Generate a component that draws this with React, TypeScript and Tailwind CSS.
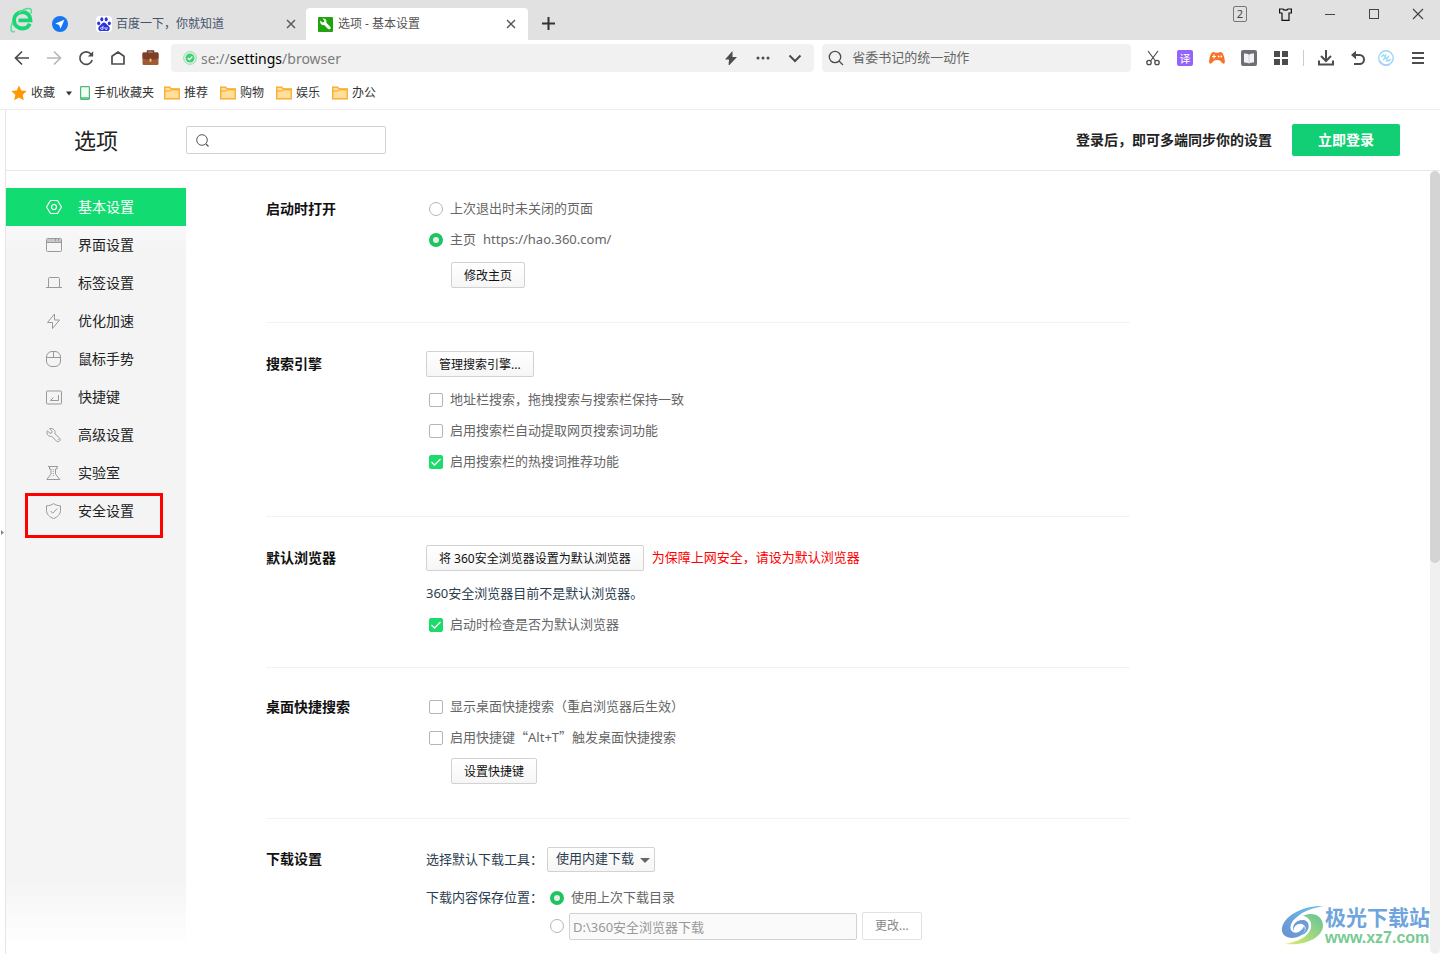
import type { ReactNode } from "react";
import clsx from "clsx";

const sansStack = "font-['Noto_Sans','Noto_Sans_CJK_SC',sans-serif]";

type IconProps = {
  size?: number;
  className?: string;
  children: ReactNode;
};

function Icon({ size = 18, className, children }: IconProps) {
  return (
    <svg
      width={size}
      height={size}
      viewBox={`0 0 ${size} ${size}`}
      fill="none"
      stroke="currentColor"
      className={clsx("shrink-0", className)}
      aria-hidden="true"
    >
      {children}
    </svg>
  );
}

function BrowserLogo() {
  return (
    <svg width="24" height="26" viewBox="0 0 24 26" fill="none" className="shrink-0" aria-hidden="true">
      <path
        d="M19.800 16.800c-1.300 3-4.100 4.700-7.300 4.700-4.800 0-8.500-3.500-8.500-8.200s3.700-8.300 8.500-8.300c4.600 0 8 3.400 8 8.300H8.500"
        stroke="#19d573"
        strokeWidth="3.800"
      />
      <path d="M21 6.500c.8-2.600.4-4.200-1-4.700C17.500 1 13 2.600 8.500 6" stroke="#4be08f" strokeWidth="1.500" />
      <path d="M2.800 14.500C.9 19 .6 23.400 2.200 24.600c.7.500 1.600.3 2.700-.2" stroke="#4be08f" strokeWidth="1.500" />
    </svg>
  );
}

function TelegramBadge() {
  return (
    <svg width="16" height="16" viewBox="0 0 16 16" className="shrink-0" aria-hidden="true">
      <circle cx="8" cy="8" r="8" fill="#1677f0" />
      <path d="M12.400 3.700 3.300 7.600l3.800 1.300 1.400 3.800z" fill="#fff" />
    </svg>
  );
}

function PawIcon() {
  return (
    <svg width="16" height="16" viewBox="0 0 16 16" className="shrink-0 rounded-sm bg-white" aria-hidden="true">
      <g fill="#2a32dd">
        <ellipse cx="2.700" cy="7.300" rx="1.500" ry="1.900" />
        <ellipse cx="5.800" cy="3.300" rx="1.500" ry="2.100" />
        <ellipse cx="10.200" cy="3.300" rx="1.500" ry="2.100" />
        <ellipse cx="13.300" cy="7.300" rx="1.500" ry="1.900" />
        <path d="M8 6.600c1.600 0 2.300 1.500 3.400 2.500 1.300 1.200 2.400 2 2.300 3.700-.1 1.700-1.500 2.500-3 2.300-1-.1-1.700-.2-2.700-.2s-1.700.1-2.700.2c-1.500.2-2.900-.6-3-2.300-.1-1.700 1-2.500 2.300-3.700C5.700 8.100 6.400 6.600 8 6.600z" />
      </g>
      <path d="M7 9.800v3.600H5.600a1 1 0 0 1 0-2H7M9 11v1.600c0 .5.300.8.800.8H11V11" fill="none" stroke="#fff" strokeWidth=".8" />
    </svg>
  );
}

function WrenchBadge() {
  return (
    <svg width="15" height="15" viewBox="0 0 15 15" className="shrink-0" aria-hidden="true">
      <rect width="15" height="15" rx="1" fill="#21a30d" />
      <path
        d="M2.300 3.500 4.400 5.500 6 5 6.400 3.400 4.500 1.700c1.800-.5 3.900.7 4 2.700 0 .5-.1.900-.2 1.300l4 4c1.400 1.500-.7 3.600-2.200 2.200L6.200 8C4 8.700 1.500 6.500 2.300 3.500z"
        fill="#fff"
      />
    </svg>
  );
}

function FolderIcon() {
  return (
    <svg width="16" height="14" viewBox="0 0 16 14" className="shrink-0" aria-hidden="true">
      <path d="M.7 12.900V1.200h5l1.300 1.600h8.200v10.100z" fill="#ffdf9b" stroke="#f9a51d" strokeWidth="1.200" />
      <path d="M1 5h5l1.200-1.100H15" fill="none" stroke="#f9a51d" />
    </svg>
  );
}

function BriefcaseIcon() {
  return (
    <svg width="17" height="16" viewBox="0 0 17 16" className="shrink-0" aria-hidden="true">
      <path d="M5.500 3V1h6v2" fill="none" stroke="#6b3420" strokeWidth="1.400" />
      <rect x=".5" y="2.500" width="16" height="12.500" rx="1.300" fill="#a05a36" />
      <path d="M.5 4c0-1 .5-1.500 1.300-1.500h13.400c.8 0 1.300.5 1.300 1.500v4.500c-5 1.600-11 1.600-16 0z" fill="#7c3f29" />
      <rect x="7.600" y="8.500" width="1.800" height="3.500" rx=".8" fill="#efc75e" />
    </svg>
  );
}

type MenuItem = { label: string; icon: ReactNode; active?: boolean; marked?: boolean };

const menu: MenuItem[] = [
  {
    label: "基本设置",
    active: true,
    icon: (
      <>
        <path d="M4.500 1.500h7l4 6.500-4 6.500h-7L.5 8z" strokeLinejoin="round" strokeWidth="1.200" />
        <circle cx="8" cy="8" r="2.500" strokeWidth="1.200" />
      </>
    ),
  },
  {
    label: "界面设置",
    icon: (
      <>
        <rect x=".5" y="1.500" width="15" height="13" rx="1" />
        <path d="M1 3.500h14" strokeOpacity=".5" strokeWidth="3" />
        <path d="M1 5.500h14M9.500 2v2M12.500 2v2" />
      </>
    ),
  },
  {
    label: "标签设置",
    icon: <path d="M2.500 12V3.500a1 1 0 0 1 1-1h9a1 1 0 0 1 1 1V12M0 12.500h16" />,
  },
  {
    label: "优化加速",
    icon: <path d="M8.500 1 1.500 9.500h5V15.500l7-8.500h-5z" strokeLinejoin="round" />,
  },
  {
    label: "鼠标手势",
    icon: (
      <>
        <rect x=".5" y=".5" width="14" height="15" rx="5.500" />
        <path d="M.5 6.500h14M7.500.5v6" />
      </>
    ),
  },
  {
    label: "快捷键",
    icon: (
      <>
        <rect x=".5" y="2" width="15" height="13" rx="1" />
        <path d="M12.500 6v5.500H4.500L7.500 8.500" />
      </>
    ),
  },
  {
    label: "高级设置",
    icon: (
      <path
        d="M3.500 1.700 6 4.200 5.600 6 4 6.300 1.400 3.800C-.2 7 2.600 10 5.800 9.300l4.600 4.700c1.900 2 5-.9 3.200-2.900L8.900 6.700C9.800 3.500 6.700.5 3.500 1.700zM11.800 12.300h.9"
        strokeLinejoin="round"
      />
    ),
  },
  {
    label: "实验室",
    icon: (
      <>
        <path d="M2 1.500h10M3.500 2v2h1.500v5L.8 14.500h13L9.500 9V4H11V2" />
        <path d="M7.300 4v8" strokeDasharray="1 1" />
      </>
    ),
  },
  {
    label: "安全设置",
    marked: true,
    icon: (
      <>
        <path d="M7.500.6c2 1.500 4.200 2 7 2.200v4.700c0 3.800-3 6.600-7 8.100-4-1.500-7-4.300-7-8.100V2.800c2.800-.2 5-.7 7-2.200z" />
        <path d="m4.500 8 2.200 2.200 4.500-4.600" />
      </>
    ),
  },
];

function TabStrip() {
  return (
    <div className="flex h-10 items-end bg-[#e1e1e1] pl-2.5">
      <div className="flex h-10 items-center gap-4 pb-px">
        <BrowserLogo />
        <span className="pt-2 pl-0.5">
          <TelegramBadge />
        </span>
      </div>
      <div className="flex h-8 w-[238px] items-center gap-1 pl-7 text-[12px] text-[#45536b]">
        <PawIcon />
        <span className="flex-1">百度一下，你就知道</span>
        <button aria-label="关闭百度标签" className="mr-2.5 text-[#555]">
          <Icon size={10}>
            <path d="m1 1 8 8M9 1 1 9" strokeWidth="1.400" />
          </Icon>
        </button>
      </div>
      <div className="flex h-8 w-[222px] items-center gap-1 rounded-t bg-white pr-3 pl-3 text-[12px] text-[#555]">
        <WrenchBadge />
        <span className="flex-1 pl-px">选项 - 基本设置</span>
        <button aria-label="关闭选项标签" className="text-[#555]">
          <Icon size={10}>
            <path d="m1 1 8 8M9 1 1 9" strokeWidth="1.400" />
          </Icon>
        </button>
      </div>
      <button aria-label="新建标签" className="mb-2.5 ml-3.5 text-[#333]">
        <Icon size={13}>
          <path d="M6.500 0v13M0 6.500h13" strokeWidth="2" />
        </Icon>
      </button>
      <div className="mb-3 ml-auto flex h-7 items-center gap-8 pr-4 text-[#444]">
        <span className="flex h-4 w-3.5 items-center justify-center rounded-xs border border-[#777] text-[11px]">2</span>
        <button aria-label="皮肤" className="text-[#111]">
          <Icon size={13}>
            <path d="M4 1H.6v4H3v7.400h7V5h2.400V1H9C8.500 2.500 4.500 2.500 4 1z" strokeWidth="1.200" />
          </Icon>
        </button>
        <button aria-label="最小化">
          <Icon size={12}>
            <path d="M1 6.500h10" />
          </Icon>
        </button>
        <button aria-label="最大化">
          <Icon size={12}>
            <rect x="1.500" y="1.500" width="9" height="9" />
          </Icon>
        </button>
        <button aria-label="关闭窗口">
          <Icon size={12}>
            <path d="m1 1 10 10M11 1 1 11" strokeWidth="1.200" />
          </Icon>
        </button>
      </div>
    </div>
  );
}

function AddressRow() {
  return (
    <div className="flex h-9 items-center pr-3.5 pl-3.5 text-[#4c4c4c]">
      <div className="flex shrink-0 items-center gap-4">
        <button aria-label="后退">
          <Icon size={16}>
            <path d="M15 8H2M8 1.500 1.500 8 8 14.500" strokeWidth="1.700" />
          </Icon>
        </button>
        <button aria-label="前进" className="text-[#b8b8b8]">
          <Icon size={16}>
            <path d="M1 8h13M8 1.500 14.500 8 8 14.500" strokeWidth="1.700" />
          </Icon>
        </button>
        <button aria-label="刷新">
          <Icon size={16}>
            <path d="M14.200 10A6.300 6.300 0 1 1 13 4L14 5.500" strokeWidth="1.700" />
            <path d="M15.200 1.200v5.300H9.800z" fill="currentColor" stroke="none" />
          </Icon>
        </button>
        <button aria-label="主页">
          <Icon size={16}>
            <path d="M2 14V6.300L8 2l6 4.300V14z" strokeWidth="1.700" strokeLinejoin="round" />
          </Icon>
        </button>
        <button aria-label="工具箱">
          <BriefcaseIcon />
        </button>
      </div>
      <div className="ml-3 flex h-7 min-w-0 flex-[643] items-center rounded bg-[#f1f1f1] px-3">
        <Icon size={14} className="text-[#41cf73]">
          <circle cx="7" cy="7" r="6.300" strokeOpacity=".6" />
          <circle cx="7" cy="7" r="4.500" fill="currentColor" stroke="none" />
          <path d="m4.700 7 1.700 1.700L9.400 5.500" stroke="#fff" strokeWidth="1.200" />
        </Icon>
        <span className="ml-1 flex-1 text-[14px] text-[#7b7b7b]">
          se://<span className="text-black">settings</span>/browser
        </span>
        <div className="flex items-center gap-[18px]">
          <button aria-label="极速模式">
            <Icon size={14}>
              <path d="M8.500 0 1 8.500h4L4.500 15 13 6H8.500z" fill="currentColor" stroke="none" />
            </Icon>
          </button>
          <button aria-label="更多">
            <Icon size={14}>
              <path d="M2 7h.01M7 7h.01M12 7h.01" strokeWidth="3" strokeLinecap="round" />
            </Icon>
          </button>
          <button aria-label="展开">
            <Icon size={14}>
              <path d="m1.500 4.500 5.500 5.500 5.500-5.500" strokeWidth="2" />
            </Icon>
          </button>
        </div>
      </div>
      <div className="ml-2 flex h-7 min-w-0 flex-[308] items-center rounded bg-[#f1f1f1] px-1.5">
        <Icon size={16}>
          <circle cx="7" cy="7" r="5.700" strokeWidth="1.300" />
          <path d="m11 11 4 4" strokeWidth="1.300" />
        </Icon>
        <input
          type="text"
          aria-label="搜索"
          placeholder="省委书记的统一动作"
          className="ml-2 min-w-0 flex-1 bg-transparent text-[13px] outline-none placeholder:text-[#666]"
        />
      </div>
      <div className="ml-3.5 flex shrink-0 items-center gap-4">
        <button aria-label="截图">
          <Icon size={16}>
            <path d="m3 1 7.500 10M13 1 5.500 11" strokeWidth="1.200" />
            <circle cx="4" cy="12.500" r="2.200" strokeWidth="1.300" />
            <circle cx="12" cy="12.500" r="2.200" strokeWidth="1.300" />
          </Icon>
        </button>
        <button
          aria-label="翻译"
          className="flex size-4 items-center justify-center rounded-xs bg-[#9464f8] text-[11px] leading-none text-white"
        >
          译
        </button>
        <button aria-label="游戏">
          <Icon size={16} className="text-[#f9722a]">
            <path
              d="M4.500 2c1.200 0 1.300.8 3.500.8S10.300 2 11.500 2c2.500 0 4 4.600 4.400 9.500.2 2.700-2 2.900-3.300 1.100-1-1.500-1.500-2.600-4.600-2.600s-3.600 1.100-4.600 2.600C2.100 14.400-.1 14.200.1 11.500.5 6.600 2 2 4.500 2z"
              fill="currentColor"
              stroke="none"
            />
            <path d="M3 6.500h4M5 4.500v4" stroke="#fff" strokeWidth="1.200" />
            <circle cx="9.700" cy="6.500" r=".9" fill="#fff" stroke="none" />
            <circle cx="12.300" cy="6.500" r=".9" fill="#fff" stroke="none" />
          </Icon>
        </button>
        <button aria-label="小说">
          <Icon size={16}>
            <rect width="16" height="16" rx="2" fill="#6e6f76" stroke="none" />
            <path d="M3 3.500c2 0 3.500 0 5 1.200 1.500-1.200 3-1.200 5-1.200v9c-2 0-3.500 0-5 1-1.500-1-3-1-5-1z" fill="#f2f2f2" stroke="none" />
            <path d="M8 5v8" stroke="#d4d4d4" />
          </Icon>
        </button>
        <button aria-label="应用">
          <Icon size={16}>
            <path
              d="M1 1h6v6H1zM9 1h6v6H9zM1 9h6v6H1zM9 9h6v6H9z"
              fill="currentColor"
              stroke="none"
            />
          </Icon>
        </button>
        <span className="-mx-0.5 h-4 w-px bg-[#ccc]" />
        <button aria-label="下载">
          <Icon size={16}>
            <path d="M8 0v10.500M3 6l5 5 5-5M1 10.500V14.500h14V10.500" strokeWidth="2" />
          </Icon>
        </button>
        <button aria-label="恢复">
          <Icon size={16}>
            <path d="M2 5h7.500a4.500 4.500 0 0 1 0 9H4" strokeWidth="2" />
            <path d="M6 .8 1 5l5 4.200z" fill="currentColor" stroke="none" />
          </Icon>
        </button>
        <button aria-label="账号" className="-ml-1">
          <Icon size={16} className="text-[#9ad7fa]">
            <circle cx="8" cy="8" r="7.200" strokeWidth="1.400" />
            <path d="M1.500 11A7.200 7.200 0 0 0 12 14" stroke="#b3cdfb" strokeWidth="2" />
            <path d="m3.200 7 2.300-2 5 6 2.500-2M5 10l2-2M9 8l2-2M7 5.500l1.500-1M7.500 11.500l1.500-1" strokeWidth="1.400" />
          </Icon>
        </button>
        <button aria-label="菜单">
          <Icon size={16}>
            <path d="M2 3h12M2 8h12M2 13h12" strokeWidth="2" />
          </Icon>
        </button>
      </div>
    </div>
  );
}

function BookmarkRow() {
  const folders = ["推荐", "购物", "娱乐", "办公"];
  return (
    <div className="flex h-[34px] items-center border-b border-[#ececec] pl-[11px] text-[12px] text-[#333]">
      <Icon size={16} className="text-[#ff9800]">
        <path
          d="m8 .5 2.300 5 5.400.6-4 3.700 1.100 5.400L8 12.500l-4.800 2.700 1.100-5.400-4-3.700 5.400-.6z"
          fill="currentColor"
          stroke="none"
        />
      </Icon>
      <a href="#fav" className="ml-1">收藏</a>
      <Icon size={8} className="ml-2.5">
        <path d="M1 2.500h6L4 6.500z" fill="currentColor" stroke="none" />
      </Icon>
      <svg width="10" height="14" viewBox="0 0 10 14" className="ml-[7px] shrink-0" aria-hidden="true">
        <rect x=".6" y=".6" width="8.800" height="12.800" rx=".8" fill="#f2fff6" stroke="#4cb978" strokeWidth="1.200" />
        <path d="M1 12h8" stroke="#4cb978" strokeWidth="1.500" />
      </svg>
      <a href="#mobile" className="ml-1">手机收藏夹</a>
      {folders.map((name) => (
        <a key={name} href={`#${name}`} className="ml-2.5 flex w-[46px] items-center gap-1">
          <FolderIcon />
          <span className="whitespace-nowrap">{name}</span>
        </a>
      ))}
    </div>
  );
}

function Sidebar() {
  return (
    <nav className="w-[180px] shrink-0 bg-[linear-gradient(to_bottom,#fff,#f4f4f4_11%,#f4f4f4_90%,#fff_99%)] pt-[17px]">
      <ul>
        {menu.map((item) => (
          <li key={item.label} className="relative">
            <a
              href={`#${item.label}`}
              className={clsx(
                "flex h-[38px] items-center gap-4 pb-px pl-10 text-[14px]",
                item.active ? "bg-[#12dc71] text-white" : "text-[#222]",
              )}
            >
              <Icon size={16} className={item.active ? "text-white" : "text-[#999]"}>
                {item.icon}
              </Icon>
              {item.label}
            </a>
            {item.marked ? (
              <span className="pointer-events-none absolute top-px left-[19px] h-[45px] w-[138px] border-3 border-[#fe0000]" />
            ) : null}
          </li>
        ))}
      </ul>
    </nav>
  );
}

function Button({ children }: { children: ReactNode }) {
  return (
    <button className="h-[26px] rounded-xs border border-[#d2d2d2] bg-linear-to-b from-white to-[#f6f6f6] px-3 pt-px text-[12px] text-[#111]">
      {children}
    </button>
  );
}

function Checkbox({ label, checked }: { label: ReactNode; checked?: boolean }) {
  return (
    <label className="flex h-[31px] items-center gap-[7px] pl-[3px] text-[#666]">
      <span className="relative flex">
        <input
          type="checkbox"
          defaultChecked={checked}
          className="peer size-3.5 appearance-none rounded-xs border border-[#b5b5b5] bg-white checked:border-[#1bdb6b] checked:bg-[#1bdb6b]"
        />
        <Icon size={14} className="pointer-events-none absolute inset-0 hidden text-white peer-checked:block">
          <path d="m2.500 7 3 3 6-6" strokeWidth="1.300" />
        </Icon>
      </span>
      <span>{label}</span>
    </label>
  );
}

type RadioProps = { name: string; label?: ReactNode; hint?: string; checked?: boolean; compact?: boolean };

function Radio({ name, label, hint, checked, compact }: RadioProps) {
  return (
    <label className={clsx("flex items-center gap-[7px] pl-[3px] text-[#666]", compact ? "h-7" : "h-[31px]")}>
      <input
        type="radio"
        name={name}
        aria-label={hint}
        defaultChecked={checked}
        className="size-3.5 appearance-none rounded-full border border-[#b5b5b5] bg-white checked:border-4 checked:border-[#1cc55f] checked:bg-[#e9e9e9]"
      />
      {label}
    </label>
  );
}

type SectionProps = { title: string; rowTitle?: boolean; className: string; children: ReactNode };

function Section({ title, rowTitle, className, children }: SectionProps) {
  return (
    <section className={clsx("flex border-b border-[#f2f2f2] last:border-b-0", className)}>
      <h2
        className={clsx(
          "w-40 shrink-0 text-[14px] font-bold text-[#111]",
          rowTitle ? "leading-[31px]" : "leading-[26px]",
        )}
      >
        {title}
      </h2>
      <div className="min-w-0 flex-1">{children}</div>
    </section>
  );
}

function Settings() {
  return (
    <main className="ml-20 max-w-[864px] min-w-0 flex-1 text-[13px]">
      <Section title="启动时打开" rowTitle className="pt-[22px] pb-[34px]">
        <Radio name="startup" label="上次退出时未关闭的页面" />
        <Radio
          name="startup"
          checked
          label={
            <>
              主页<span>https://hao.360.com/</span>
            </>
          }
        />
        <div className="mt-[7px] pl-[25px]">
          <Button>修改主页</Button>
        </div>
      </Section>
      <Section title="搜索引擎" className="pt-7 pb-[39px]">
        <Button>管理搜索引擎...</Button>
        <div className="mt-[7px]">
          <Checkbox label="地址栏搜索，拖拽搜索与搜索栏保持一致" />
          <Checkbox label="启用搜索栏自动提取网页搜索词功能" />
          <Checkbox label="启用搜索栏的热搜词推荐功能" checked />
        </div>
      </Section>
      <Section title="默认浏览器" className="pt-7 pb-[27px]">
        <div className="flex items-center gap-2">
          <Button>将 360安全浏览器设置为默认浏览器</Button>
          <span className="text-[#fe0000]">为保障上网安全，请设为默认浏览器</span>
        </div>
        <p className="mt-[7px] leading-[31px] text-[#2c3e50]">360安全浏览器目前不是默认浏览器。</p>
        <Checkbox label="启动时检查是否为默认浏览器" checked />
      </Section>
      <Section title="桌面快捷搜索" rowTitle className="pt-[23px] pb-[34px]">
        <Checkbox label="显示桌面快捷搜索（重启浏览器后生效）" />
        <Checkbox
          label={
            <>
              启用快捷键<span className="font-['Noto_Sans_CJK_SC',sans-serif]">“</span>Alt+T
              <span className="font-['Noto_Sans_CJK_SC',sans-serif]">”</span>触发桌面快捷搜索
            </>
          }
        />
        <div className="mt-[5px] pl-[25px]">
          <Button>设置快捷键</Button>
        </div>
      </Section>
      <Section title="下载设置" className="pt-[27px]">
        <div className="flex items-center text-[#2c3e50]">
          <label htmlFor="tool" className="w-[121px] leading-[26px]">
            选择默认下载工具：
          </label>
          <span className="relative">
            <select
              id="tool"
              className="h-[25px] w-[108px] appearance-none rounded-xs border border-[#d2d2d2] bg-linear-to-b from-white to-[#f6f6f6] pl-2"
            >
              <option>使用内建下载</option>
            </select>
            <Icon size={10} className="pointer-events-none absolute top-2 right-[5px] text-[#666]">
              <path d="M0 3h10L5 8z" fill="currentColor" stroke="none" />
            </Icon>
          </span>
        </div>
        <div className="mt-3 flex">
          <span className="w-[121px] leading-[26px] text-[#2c3e50]">下载内容保存位置：</span>
          <div>
            <Radio name="folder" checked compact label="使用上次下载目录" />
            <div className="flex items-center gap-[5px]">
              <Radio name="folder" compact hint="使用指定目录" />
              <input
                type="text"
                aria-label="下载目录"
                defaultValue="D:\360安全浏览器下载"
                className="h-[27px] w-72 rounded-xs border border-[#d2d2d2] bg-[#fafafa] px-[3px] text-[#999]"
              />
              <button className="h-7 rounded-xs border border-[#e2e2e2] px-3 text-[12px] text-[#888]">更改...</button>
            </div>
          </div>
        </div>
      </Section>
    </main>
  );
}

function Watermark() {
  return (
    <div className="pointer-events-none absolute right-2.5 bottom-1.5 flex items-center">
      <svg width="44" height="42" viewBox="0 0 44 42" fill="none" aria-hidden="true">
        <defs>
          <linearGradient id="swirlBlue" x1="0" y1="1" x2="1" y2="0">
            <stop offset="0" stopColor="#6a8fd0" />
            <stop offset="1" stopColor="#6cc4ef" />
          </linearGradient>
          <linearGradient id="swirlGreen" x1="0" y1="1" x2="1" y2="0">
            <stop offset="0" stopColor="#dcec6a" />
            <stop offset="1" stopColor="#62c398" />
          </linearGradient>
        </defs>
        <path
          d="M43 1C22 0 3 11 1 23c-1 10 10 12 18 8 5-3 6-7 4-10-2 5-7 8-11 6-5-3-2-11 4-15C22 6 32 3 43 1z"
          fill="url(#swirlBlue)"
        />
        <path d="M23 15c-8-1-13 6-10 11-1-5 4-8 8-7 5 2 5 7-1 11 8-1 11-13 3-15z" fill="#6d9bd8" />
        <path
          d="M22 11c10-5 20 0 20 10-1 12-18 20-38 18 11-2 23-6 26-16 1-6-2-11-8-12z"
          fill="url(#swirlGreen)"
        />
      </svg>
      <div>
        <p className="font-['Noto_Sans_CJK_SC',sans-serif] text-[21px] leading-6 font-bold text-[#6fa5dc]">极光下载站</p>
        <p className="font-['Liberation_Sans',sans-serif] text-[16px] leading-5 font-bold text-[#76cb92]">www.xz7.com</p>
      </div>
    </div>
  );
}

export default function App() {
  return (
    <div className={clsx("relative flex h-screen flex-col overflow-hidden bg-white", sansStack)}>
      <header>
        <TabStrip />
        <AddressRow />
        <BookmarkRow />
      </header>
      <div className="flex min-h-0 flex-1">
        <div className="flex w-1.5 shrink-0 items-center border-r border-[#e4e4e4]">
          <Icon size={5}>
            <path d="M1 0 4 2.500 1 5z" fill="#888" stroke="none" />
          </Icon>
        </div>
        <div className="flex min-w-0 flex-1 flex-col">
          <div className="flex h-[61px] shrink-0 items-center border-b border-[#e8e8e8] pr-10 pl-[68px]">
            <h1 className="w-28 text-[22px] text-[#222]">选项</h1>
            <label className="flex h-7 w-[200px] items-center rounded-xs border border-[#d2d2d2] px-2">
              <Icon size={15} className="text-[#555]">
                <circle cx="7" cy="7" r="5.300" />
                <path d="m11 11 2.500 2.500" strokeWidth="1.200" />
              </Icon>
              <input type="text" aria-label="搜索设置" className="ml-2 min-w-0 flex-1 text-[13px] outline-none" />
            </label>
            <span className="ml-auto pb-px text-[14px] font-bold text-[#222]">登录后，即可多端同步你的设置</span>
            <button className="ml-5 h-8 w-[108px] rounded-xs bg-[#12ce75] pb-px text-[14px] font-bold text-white">
              立即登录
            </button>
          </div>
          <div className="flex min-h-0 flex-1 overflow-hidden">
            <Sidebar />
            <Settings />
            <div className="ml-auto w-2.5 shrink-0 rounded-full bg-[#f0f0f0]">
              <div className="h-1/2 rounded-full bg-[#d4d4d4]" />
            </div>
          </div>
        </div>
      </div>
      <Watermark />
    </div>
  );
}
